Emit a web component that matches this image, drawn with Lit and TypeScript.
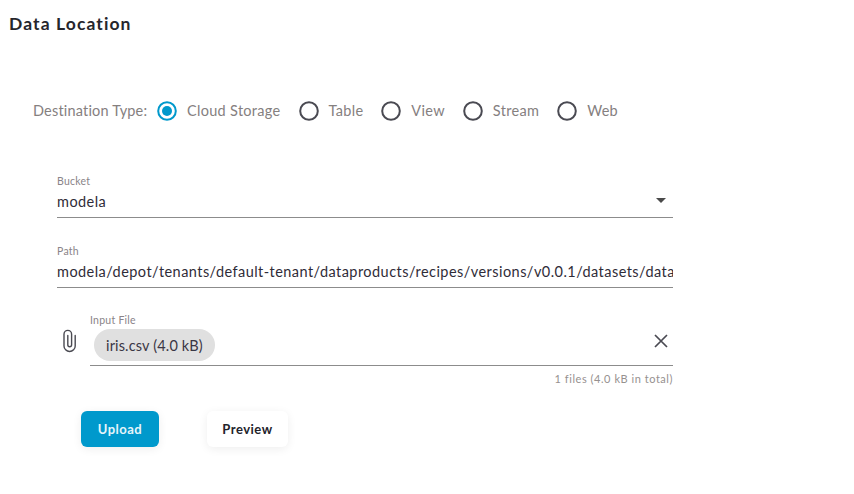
import { LitElement, html, css, svg } from "lit";
import { customElement } from "lit/decorators.js";

const OPTIONS = ["Cloud Storage", "Table", "View", "Stream", "Web"];

@customElement("app-root")
export class AppRoot extends LitElement {
  static styles = css`
    :host {
      display: block;
      width: 854px;
      height: 494px;
      box-sizing: border-box;
      background: #fff;
      font-family: "Lato", "Open Sans", sans-serif;
      color: #2b2b33;
      padding: 13px 0 0 9px;
      overflow: hidden;
    }
    .title {
      font-size: 17.5px;
      line-height: 21px;
      font-weight: 700;
      letter-spacing: 1.1px;
      color: #26262c;
    }
    .dest {
      display: flex;
      align-items: center;
      height: 24px;
      margin: 65px 0 0 24px;
      font-size: 14.5px;
      letter-spacing: 0.3px;
      color: #85807f;
    }
    .dest-label { width: 124px; letter-spacing: 0.18px; padding-bottom: 1px; }
    .opt { display: flex; align-items: center; gap: 10px; margin-right: 18px; }
    .opt span { padding-bottom: 1px; }
    .opt svg { display: block; width: 20px; height: 20px; flex: none; }
    .fields {
      width: 616px;
      margin: 52px 0 0 48px;
      display: flex;
      flex-direction: column;
    }
    .field { height: 42px; margin-bottom: 27px; border-bottom: 1px solid #8c8c8c; position: relative; }
    .label { font-size: 10.5px; line-height: 12px; letter-spacing: 0.25px; color: #8a8488; }
    .value {
      font-size: 14.5px;
      line-height: 20px;
      margin-top: 5px;
      letter-spacing: 0.45px;
      white-space: nowrap;
      overflow: hidden;
      color: #2f2c38;
    }
    .arrow { position: absolute; right: 7px; top: 23px; width: 0; height: 0;
      border-left: 5px solid transparent; border-right: 5px solid transparent; border-top: 5px solid #4a4a4a; }
    .file-row { display: flex; margin-top: -1px; }
    .clip { width: 33px; padding-top: 15px; flex: none; }
    .clip svg { display: block; width: 24px; height: 24px; }
    .file-main { flex: 1; }
    .file-field { height: 39px; border-bottom: 1px solid #8c8c8c; position: relative; }
    .chip {
      display: inline-flex;
      align-items: center;
      height: 32px;
      margin: 3px 0 0 4px;
      padding: 0 12px;
      border-radius: 16px;
      background: #e0e0e0;
      font-size: 14.5px;
      letter-spacing: 0.15px;
      color: #3a3644;
    }
    .x { position: absolute; right: 0; top: 3px; width: 24px; height: 24px; display: block; }
    .help { text-align: right; font-size: 11px; line-height: 13px; margin-top: 6px; letter-spacing: 0.54px; color: #96918f; }
    .buttons { display: flex; gap: 48px; margin: 26px 0 0 72px; }
    .btn {
      height: 36px;
      border: 0;
      border-radius: 6px;
      font: 700 13px "Lato", sans-serif;
      letter-spacing: 0.5px;
      display: flex;
      align-items: center;
      justify-content: center;
      padding: 0;
      box-shadow: 0 2px 10px rgba(0, 0, 0, 0.07);
    }
    .upload { width: 78px; background: #0099cc; color: #e6f5fa; }
    .preview { width: 81px; background: #fff; color: #23232b; }
  `;

  private radio(on: boolean) {
    return html`<svg viewBox="0 0 20 20">
      ${on
        ? svg`<circle cx="10" cy="10" r="8.8" fill="none" stroke="#0099cc" stroke-width="2"/><circle cx="10" cy="10" r="5" fill="#0099cc"/>`
        : svg`<circle cx="10" cy="10" r="8.8" fill="none" stroke="#4a4a52" stroke-width="2"/>`}
    </svg>`;
  }

  render() {
    return html`
      <div class="title">Data Location</div>
      <div class="dest">
        <div class="dest-label">Destination Type:</div>
        ${OPTIONS.map(
          (o, i) => html`<div class="opt">${this.radio(i === 0)}<span>${o}</span></div>`
        )}
      </div>
      <div class="fields">
        <div class="field">
          <div class="label">Bucket</div>
          <div class="value">modela</div>
          <div class="arrow"></div>
        </div>
        <div class="field">
          <div class="label">Path</div>
          <div class="value">modela/depot/tenants/default-tenant/dataproducts/recipes/versions/v0.0.1/datasets/data</div>
        </div>
        <div class="file-row">
          <div class="clip">
            <svg viewBox="0 0 24 24" fill="none" stroke="#4a4a52" stroke-width="1.4" stroke-linecap="round">
              <path d="M18.2 6.5v10.4a5.6 5.6 0 0 1-11.2 0V5.2a3.8 3.8 0 0 1 7.6 0v10.6a1.9 1.9 0 0 1-3.8 0V6.5" />
            </svg>
          </div>
          <div class="file-main">
            <div class="label">Input File</div>
            <div class="file-field">
              <div class="chip">iris.csv (4.0 kB)</div>
              <svg class="x" viewBox="0 0 24 24" fill="none" stroke="#4a4a52" stroke-width="1.7">
                <path d="M6 6l12 12M18 6L6 18" />
              </svg>
            </div>
            <div class="help">1 files (4.0 kB in total)</div>
          </div>
        </div>
      </div>
      <div class="buttons">
        <button class="btn upload">Upload</button>
        <button class="btn preview">Preview</button>
      </div>
    `;
  }
}
